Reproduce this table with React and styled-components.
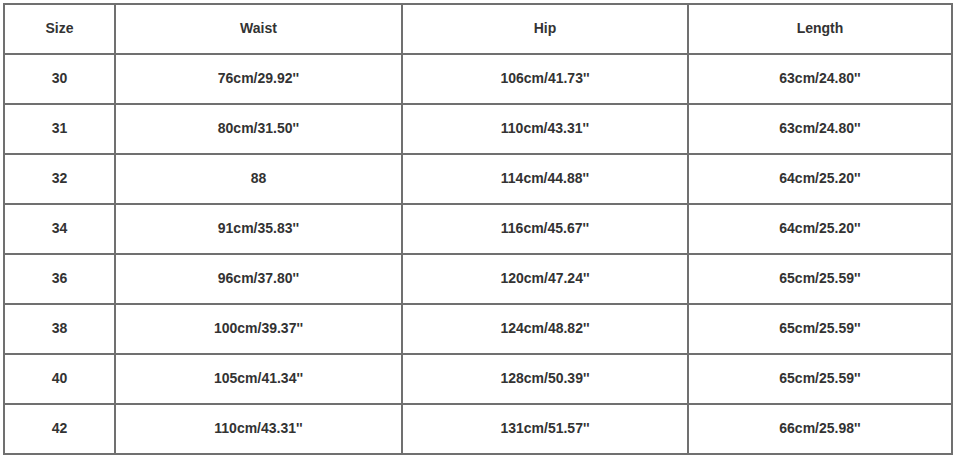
import React from "react";
import styled, { createGlobalStyle } from "styled-components";

const GlobalStyle = createGlobalStyle`
  html, body {
    margin: 0;
    padding: 0;
    background: #ffffff;
  }
`;

const rows = [
  ["30", "76cm/29.92''", "106cm/41.73''", "63cm/24.80''"],
  ["31", "80cm/31.50''", "110cm/43.31''", "63cm/24.80''"],
  ["32", "88", "114cm/44.88''", "64cm/25.20''"],
  ["34", "91cm/35.83''", "116cm/45.67''", "64cm/25.20''"],
  ["36", "96cm/37.80''", "120cm/47.24''", "65cm/25.59''"],
  ["38", "100cm/39.37''", "124cm/48.82''", "65cm/25.59''"],
  ["40", "105cm/41.34''", "128cm/50.39''", "65cm/25.59''"],
  ["42", "110cm/43.31''", "131cm/51.57''", "66cm/25.98''"],
];

const Page = styled.div`
  padding: 3px 0 0 3px;
`;

const SizeGrid = styled.div`
  width: 950px;
  box-sizing: border-box;
  display: grid;
  grid-template-columns: 109px 285px 284px 262px;
  grid-auto-rows: 48px;
  gap: 2px;
  padding: 2px;
  background: #707070;
`;

const Cell = styled.div`
  background: #ffffff;
  display: flex;
  align-items: center;
  justify-content: center;
  padding-bottom: 3px;
  box-sizing: border-box;
  font-family: "Liberation Sans", Arial, sans-serif;
  font-size: 14px;
  font-weight: bold;
  color: #333333;
`;

const header = ["Size", "Waist", "Hip", "Length"];

export default function App() {
  return (
    <Page>
      <GlobalStyle />
      <SizeGrid>
        {header.map((h) => (
          <Cell key={h}>{h}</Cell>
        ))}
        {rows.map((r) =>
          r.map((v, i) => <Cell key={r[0] + i}>{v}</Cell>)
        )}
      </SizeGrid>
    </Page>
  );
}
